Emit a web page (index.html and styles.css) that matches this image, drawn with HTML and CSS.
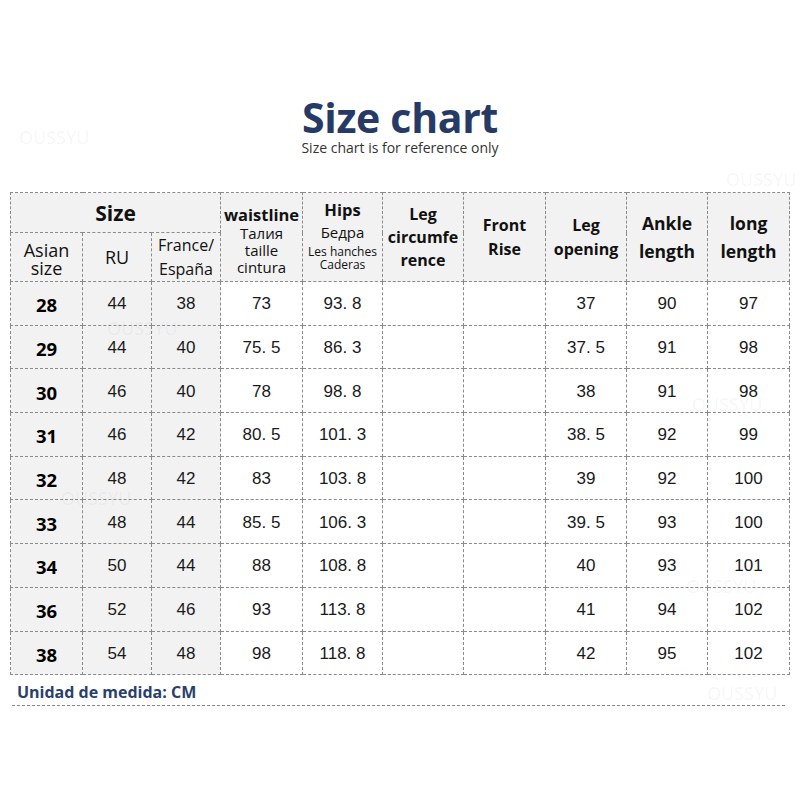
FILE: index.html
```html
<!DOCTYPE html>
<html>
<head>
<meta charset="utf-8">
<title>Size chart</title>
<link rel="stylesheet" href="styles.css">
</head>
<body>
<div class="page">
  <h1 class="title">Size chart</h1>
  <p class="subtitle">Size chart is for reference only</p>
  <table class="chart">
    <colgroup>
      <col class="c1"><col class="c2"><col class="c3"><col class="c4"><col class="c5">
      <col class="c6"><col class="c7"><col class="c8"><col class="c9"><col class="c10">
    </colgroup>
    <thead>
      <tr class="h1">
        <th colspan="3" class="size-head">Size</th>
        <th rowspan="2" class="waist"><div class="hb">waistline</div><div class="hs">Талия<br>taille<br>cintura</div></th>
        <th rowspan="2" class="hipcell"><div class="hb hips">Hips</div><div class="hs hs-r">Бедра</div><div class="hx">Les hanches<br>Caderas</div></th>
        <th rowspan="2" class="b16 lh23">Leg<br>circumfe<br>rence</th>
        <th rowspan="2" class="b16 lh24">Front<br>Rise</th>
        <th rowspan="2" class="b16 lh24">Leg<br>opening</th>
        <th rowspan="2" class="b18 lh28">Ankle<br>length</th>
        <th rowspan="2" class="b18 lh28">long<br>length</th>
      </tr>
      <tr class="h2">
        <th class="n18 lh18 asian">Asian<br>size</th>
        <th class="n18">RU</th>
        <th class="n16 lh24">France/<br>España</th>
      </tr>
    </thead>
    <tbody>
      <tr><td class="k">28</td><td class="g">44</td><td class="g">38</td><td>73</td><td>93. 8</td><td></td><td></td><td>37</td><td>90</td><td>97</td></tr>
      <tr><td class="k">29</td><td class="g">44</td><td class="g">40</td><td>75. 5</td><td>86. 3</td><td></td><td></td><td>37. 5</td><td>91</td><td>98</td></tr>
      <tr><td class="k">30</td><td class="g">46</td><td class="g">40</td><td>78</td><td>98. 8</td><td></td><td></td><td>38</td><td>91</td><td>98</td></tr>
      <tr><td class="k">31</td><td class="g">46</td><td class="g">42</td><td>80. 5</td><td>101. 3</td><td></td><td></td><td>38. 5</td><td>92</td><td>99</td></tr>
      <tr><td class="k">32</td><td class="g">48</td><td class="g">42</td><td>83</td><td>103. 8</td><td></td><td></td><td>39</td><td>92</td><td>100</td></tr>
      <tr><td class="k">33</td><td class="g">48</td><td class="g">44</td><td>85. 5</td><td>106. 3</td><td></td><td></td><td>39. 5</td><td>93</td><td>100</td></tr>
      <tr><td class="k">34</td><td class="g">50</td><td class="g">44</td><td>88</td><td>108. 8</td><td></td><td></td><td>40</td><td>93</td><td>101</td></tr>
      <tr><td class="k">36</td><td class="g">52</td><td class="g">46</td><td>93</td><td>113. 8</td><td></td><td></td><td>41</td><td>94</td><td>102</td></tr>
      <tr><td class="k">38</td><td class="g">54</td><td class="g">48</td><td>98</td><td>118. 8</td><td></td><td></td><td>42</td><td>95</td><td>102</td></tr>
    </tbody>
  </table>
  <div class="unit">Unidad de medida: CM</div>

  <span class="wm wm1">OUSSYU</span>
  <span class="wm wm2">OUSSYU</span>
  <span class="wm wm3">OUSSYU</span>
  <span class="wm wm4">OUSSYU</span>
  <span class="wm wm5">OUSSYU</span>
  <span class="wm wm6">OUSSYU</span>
  <span class="wm wm7">OUSSYU</span>
</div>
</body>
</html>
```

FILE: styles.css
```css
html, body {
  margin: 0;
  padding: 0;
  background: #ffffff;
}

.page {
  position: relative;
  width: 800px;
  height: 800px;
  box-sizing: border-box;
  padding-top: 97px;
  font-family: "Open Sans", "Noto Sans", sans-serif;
  color: #111;
  overflow: hidden;
}

.title {
  margin: 0;
  text-align: center;
  font-size: 41px;
  line-height: 40px;
  font-weight: 700;
  color: #273a66;
  letter-spacing: -0.3px;
}

.subtitle {
  margin: 4px 0 0 0;
  text-align: center;
  font-size: 14px;
  line-height: 14px;
  color: #333333;
}

.chart {
  margin: 37px 0 0 10px;
  border-collapse: collapse;
  table-layout: fixed;
  width: 780px;
}

.c1 { width: 72px; }
.c2 { width: 69px; }
.c3 { width: 69px; }
.c4 { width: 82px; }
.c5 { width: 80px; }
.c6 { width: 81px; }
.c7 { width: 82px; }
.c8 { width: 81px; }
.c9 { width: 81px; }
.c10 { width: 82px; }

.chart th,
.chart td {
  border: 1px dashed #8a8a8a;
  padding: 0;
  text-align: center;
  vertical-align: middle;
}

.chart th {
  background: #f2f2f2;
  color: #111;
  font-weight: 700;
}

.h1 { height: 40px; }
.h2 { height: 48px; }

.size-head {
  font-size: 21px;
  line-height: 24px;
}

.chart th.waist {
  padding-top: 5px;
}

.chart th.hipcell {
  padding-bottom: 4px;
}

.hb {
  font-size: 16.5px;
  line-height: 21px;
  font-weight: 700;
}

.hips { line-height: 22px; }

.hs {
  font-size: 15px;
  line-height: 17px;
  font-weight: 400;
}

.hs-r {
  line-height: 22px;
  margin-bottom: 2px;
}

.hx {
  font-size: 12px;
  line-height: 13px;
  font-weight: 400;
}

.b16 { font-size: 16px; }
.b18 { font-size: 17.5px; }
.n18 { font-size: 18px; font-weight: 400 !important; }
.n16 { font-size: 16px; font-weight: 400 !important; }
.lh18 { line-height: 18px; }
.lh23 { line-height: 23px; }
.lh24 { line-height: 24px; }
.lh28 { line-height: 28px; }

.chart th.asian { padding-top: 4px; }

.chart tbody tr { height: 43.7px; }

.chart td {
  font-family: "Liberation Sans", "Noto Sans CJK SC", sans-serif;
  font-size: 17px;
  color: #1a1a1a;
  background: #ffffff;
  padding-top: 2px;
}

.chart td.g {
  background: #f2f2f2;
}

.chart td.k {
  background: #f2f2f2;
  font-family: "Open Sans", sans-serif;
  font-weight: 700;
  font-size: 18.5px;
  color: #000;
  padding-top: 3px;
}

.unit {
  margin-left: 12px;
  width: 773px;
  height: 31px;
  box-sizing: border-box;
  padding: 6px 0 0 5px;
  border-bottom: 1px dashed #8a8a8a;
  font-size: 16px;
  line-height: 22px;
  font-weight: 700;
  color: #2b3f6b;
}

.wm {
  position: absolute;
  font-family: "Noto Sans", sans-serif;
  font-size: 18px;
  line-height: 18px;
  color: rgba(0, 0, 0, 0.05);
  pointer-events: none;
}

.wm1 { left: 19px; top: 128px; }
.wm2 { left: 726px; top: 170px; }
.wm3 { left: 107px; top: 319px; }
.wm4 { left: 692px; top: 395px; }
.wm5 { left: 61px; top: 489px; }
.wm6 { left: 686px; top: 577px; }
.wm7 { left: 707px; top: 684px; }
```
